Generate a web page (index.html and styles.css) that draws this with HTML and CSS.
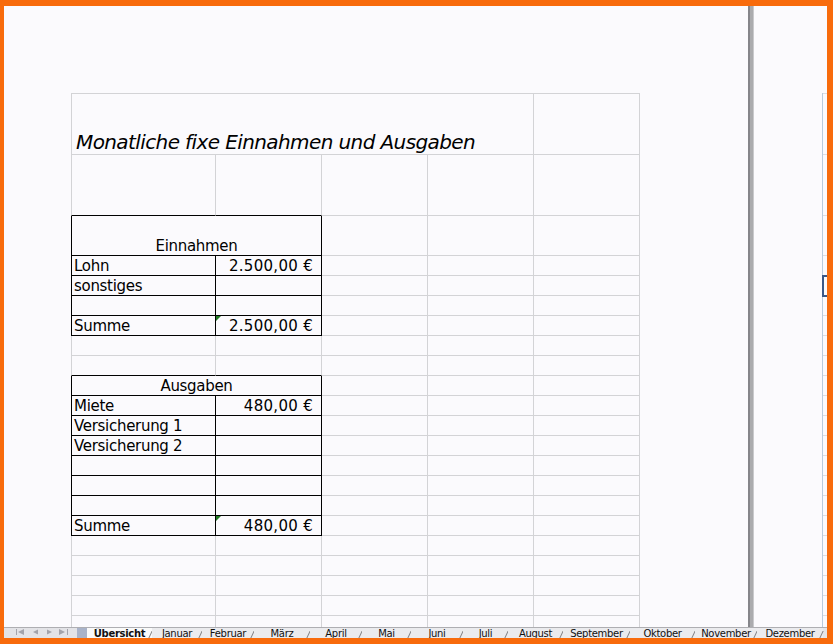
FILE: index.html
```html
<!DOCTYPE html>
<html lang="de">
<head>
<meta charset="utf-8">
<title>Monatliche fixe Einnahmen und Ausgaben</title>
<link rel="stylesheet" href="styles.css">
</head>
<body>
<div class="frame">
  <div class="main">
    <div class="pane-left">
      <div class="grid">
        <!-- row 1 -->
        <div class="c a t span4 title">Monatliche fixe Einnahmen und Ausgaben</div>
        <div class="c t"></div>
        <!-- row 2 -->
        <div class="c a kb"></div><div class="c kb"></div><div class="c"></div><div class="c"></div><div class="c"></div>
        <!-- row 3 -->
        <div class="c a k span2 ctr">Einnahmen</div><div class="c"></div><div class="c"></div><div class="c"></div>
        <!-- row 4 -->
        <div class="c a k">Lohn</div><div class="c k num">2.500,00 €</div><div class="c"></div><div class="c"></div><div class="c"></div>
        <!-- row 5 -->
        <div class="c a k">sonstiges</div><div class="c k"></div><div class="c"></div><div class="c"></div><div class="c"></div>
        <!-- row 6 -->
        <div class="c a k"></div><div class="c k"></div><div class="c"></div><div class="c"></div><div class="c"></div>
        <!-- row 7 -->
        <div class="c a k">Summe</div><div class="c k num tri">2.500,00 €</div><div class="c"></div><div class="c"></div><div class="c"></div>
        <!-- row 8 -->
        <div class="c a"></div><div class="c"></div><div class="c"></div><div class="c"></div><div class="c"></div>
        <!-- row 9 -->
        <div class="c a kb"></div><div class="c kb"></div><div class="c"></div><div class="c"></div><div class="c"></div>
        <!-- row 10 -->
        <div class="c a k span2 ctr">Ausgaben</div><div class="c"></div><div class="c"></div><div class="c"></div>
        <!-- row 11 -->
        <div class="c a k">Miete</div><div class="c k num">480,00 €</div><div class="c"></div><div class="c"></div><div class="c"></div>
        <!-- row 12 -->
        <div class="c a k">Versicherung 1</div><div class="c k"></div><div class="c"></div><div class="c"></div><div class="c"></div>
        <!-- row 13 -->
        <div class="c a k">Versicherung 2</div><div class="c k"></div><div class="c"></div><div class="c"></div><div class="c"></div>
        <!-- row 14 -->
        <div class="c a k"></div><div class="c k"></div><div class="c"></div><div class="c"></div><div class="c"></div>
        <!-- row 15 -->
        <div class="c a k"></div><div class="c k"></div><div class="c"></div><div class="c"></div><div class="c"></div>
        <!-- row 16 -->
        <div class="c a k"></div><div class="c k"></div><div class="c"></div><div class="c"></div><div class="c"></div>
        <!-- row 17 -->
        <div class="c a k">Summe</div><div class="c k num tri">480,00 €</div><div class="c"></div><div class="c"></div><div class="c"></div>
        <!-- rows 18-22 -->
        <div class="c a"></div><div class="c"></div><div class="c"></div><div class="c"></div><div class="c"></div>
        <div class="c a"></div><div class="c"></div><div class="c"></div><div class="c"></div><div class="c"></div>
        <div class="c a"></div><div class="c"></div><div class="c"></div><div class="c"></div><div class="c"></div>
        <div class="c a"></div><div class="c"></div><div class="c"></div><div class="c"></div><div class="c"></div>
        <div class="c a"></div><div class="c"></div><div class="c"></div><div class="c"></div><div class="c"></div>
      </div>
    </div>
    <div class="splitter"></div>
    <div class="pane-right">
      <div class="rgrid">
        <div class="r t"></div>
        <div class="r"></div>
        <div class="r"></div>
        <div class="r"></div>
        <div class="r sel"></div>
        <div class="r"></div>
        <div class="r"></div>
        <div class="r"></div>
        <div class="r"></div>
        <div class="r"></div>
        <div class="r"></div>
        <div class="r"></div>
        <div class="r"></div>
        <div class="r"></div>
        <div class="r"></div>
        <div class="r"></div>
        <div class="r"></div>
        <div class="r"></div>
        <div class="r"></div>
        <div class="r"></div>
        <div class="r"></div>
        <div class="r"></div>
      </div>
    </div>
  </div>
  <div class="tabbar">
    <div class="nav">
      <svg width="73" height="10" viewBox="0 0 73 10">
        <g fill="#a3a3ab">
          <rect x="12" y="1" width="1" height="6"/>
          <polygon points="14,4 20,1 20,7"/>
          <polygon points="29,4 34,1.5 34,6.5"/>
          <polygon points="48,4 43,1.5 43,6.5"/>
          <polygon points="61,4 55,1 55,7"/>
          <rect x="63" y="1" width="1" height="6"/>
        </g>
      </svg>
    </div>
    <div class="navbox"></div>
    <div class="tabs">
      <div class="tab active">Übersicht</div>
      <div class="tab">Januar</div>
      <div class="tab">Februar</div>
      <div class="tab">März</div>
      <div class="tab">April</div>
      <div class="tab">Mai</div>
      <div class="tab">Juni</div>
      <div class="tab">Juli</div>
      <div class="tab">August</div>
      <div class="tab">September</div>
      <div class="tab">Oktober</div>
      <div class="tab">November</div>
      <div class="tab">Dezember</div>
    </div>
  </div>
</div>
</body>
</html>
```

FILE: styles.css
```css
html, body {
  margin: 0;
  padding: 0;
  background: #f86b0c;
  overflow: hidden;
}

.frame {
  margin: 6px 6px 6px 4px;
  width: 823px;
  height: 632px;
  background: #fbfafd;
  display: flex;
  flex-direction: column;
  overflow: hidden;
}

.main {
  height: 621px;
  flex: none;
  display: flex;
}

.pane-left {
  width: 744px;
  flex: none;
  box-sizing: border-box;
  padding: 87px 0 0 67px;
  overflow: hidden;
}

.grid {
  display: grid;
  grid-template-columns: 145px 106px 106px 106px 106px;
  grid-template-rows: 62px 61px 40px repeat(19, 20px);
  width: 569px;
  font-family: "DejaVu Sans", sans-serif;
  font-size: 15px;
  letter-spacing: -0.3px;
  color: #000;
}

.c {
  box-sizing: border-box;
  border-right: 1px solid #d3d3d6;
  border-bottom: 1px solid #d3d3d6;
  display: flex;
  align-items: flex-end;
  justify-content: flex-start;
  padding: 0 2px;
  line-height: 17px;
  white-space: nowrap;
  position: relative;
}

.c.a { border-left: 1px solid #d3d3d6; }
.c.t { border-top: 1px solid #d3d3d6; }

.span4 { grid-column: span 4; }
.span2 { grid-column: span 2; }

.c.k {
  border-right-color: #000;
  border-bottom-color: #000;
}
.c.a.k { border-left-color: #000; }
.c.kb { border-bottom-color: #000; }

.num {
  justify-content: flex-end;
  padding-right: 8px;
  letter-spacing: 0.3px;
}

.ctr { justify-content: center; }

.title {
  font-style: italic;
  font-size: 20px;
  line-height: 24px;
  letter-spacing: -0.6px;
  padding-left: 4px;
}

.tri::before {
  content: "";
  position: absolute;
  left: 0;
  top: 0;
  width: 0;
  height: 0;
  border-top: 5px solid #1f7a22;
  border-right: 5px solid transparent;
}

.splitter {
  width: 6px;
  flex: none;
  box-sizing: border-box;
  background: #ababae;
  border-left: 2px solid #85858a;
  border-right: 1px solid #c9c9cc;
}

.pane-right {
  width: 73px;
  flex: none;
  box-sizing: border-box;
  padding: 87px 0 0 68px;
  overflow: hidden;
}

.rgrid {
  display: grid;
  grid-template-columns: 20px;
  grid-template-rows: 62px 61px 40px repeat(19, 20px);
  border-left: 1px solid #b9cbdc;
}

.r {
  box-sizing: border-box;
  border-bottom: 1px solid #dcdce0;
}
.r.t { border-top: 1px solid #dcdce0; }
.r.sel {
  outline: 2px solid #3a5886;
  outline-offset: -1px;
}

.tabbar {
  height: 11px;
  flex: none;
  box-sizing: border-box;
  border-top: 1px solid #aeaeb2;
  background: #e5e5e8;
  display: flex;
  font-family: "DejaVu Sans", sans-serif;
  font-size: 10px;
  line-height: 10px;
  letter-spacing: -0.3px;
  color: #111;
  overflow: hidden;
}

.nav {
  width: 73px;
  flex: none;
  background: #e3e3e7;
}
.nav svg { display: block; }

.navbox {
  width: 10px;
  flex: none;
  background: #a9b3c9;
}

.tabs {
  display: flex;
  flex: 1;
}

.tab {
  flex: none;
  text-align: center;
  position: relative;
  white-space: nowrap;
  background: #ebebee;
  padding-top: 1px;
}

.tab::after {
  content: "";
  position: absolute;
  right: 1px;
  bottom: 0;
  width: 1px;
  height: 7px;
  background: #7c7c80;
  transform: skewX(-25deg);
}

.tab.active {
  background: #fafafa;
  font-weight: bold;
}

.tab:nth-child(1) { width: 65px; }
.tab:nth-child(2) { width: 50px; }
.tab:nth-child(3) { width: 52px; }
.tab:nth-child(4) { width: 56px; }
.tab:nth-child(5) { width: 52px; }
.tab:nth-child(6) { width: 49px; }
.tab:nth-child(7) { width: 52px; }
.tab:nth-child(8) { width: 45px; }
.tab:nth-child(9) { width: 55px; }
.tab:nth-child(10) { width: 67px; }
.tab:nth-child(11) { width: 65px; }
.tab:nth-child(12) { width: 62px; }
.tab:nth-child(13) { width: 66px; }
```
